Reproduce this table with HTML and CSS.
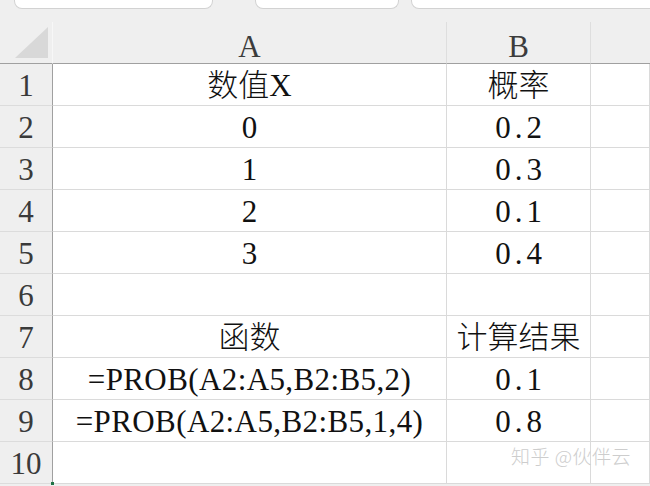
FILE: index.html
```html
<!DOCTYPE html>
<html lang="zh">
<head>
<meta charset="utf-8">
<link rel="stylesheet" href="styles.css">
</head>
<body>
<div class="topbar">
  <div class="tab tab1"></div>
  <div class="tab tab2"></div>
  <div class="tab tab3"></div>
</div>
<div class="sheet">
  <div class="corner"><svg width="53" height="42" viewBox="0 0 53 42"><polygon points="15,36 48,5 48,36" fill="#d8d8d8"/></svg></div>
  <div class="colhead">A</div>
  <div class="colhead">B</div>
  <div class="colhead last"></div>

  <div class="rowhead">1</div><div class="cell">数值X</div><div class="cell">概率</div><div class="cell"></div>
  <div class="rowhead">2</div><div class="cell">0</div><div class="cell dec">0.2</div><div class="cell"></div>
  <div class="rowhead">3</div><div class="cell">1</div><div class="cell dec">0.3</div><div class="cell"></div>
  <div class="rowhead">4</div><div class="cell">2</div><div class="cell dec">0.1</div><div class="cell"></div>
  <div class="rowhead">5</div><div class="cell">3</div><div class="cell dec">0.4</div><div class="cell"></div>
  <div class="rowhead">6</div><div class="cell"></div><div class="cell"></div><div class="cell"></div>
  <div class="rowhead">7</div><div class="cell">函数</div><div class="cell">计算结果</div><div class="cell"></div>
  <div class="rowhead">8</div><div class="cell formula">=PROB(A2:A5,B2:B5,2)</div><div class="cell dec">0.1</div><div class="cell"></div>
  <div class="rowhead">9</div><div class="cell formula">=PROB(A2:A5,B2:B5,1,4)</div><div class="cell dec">0.8</div><div class="cell"></div>
  <div class="rowhead">10</div><div class="cell"></div><div class="cell"></div><div class="cell"></div>
</div>
<div class="watermark">知乎 @伙伴云</div>
<div class="handle"></div>
</body>
</html>
```
FILE: styles.css
```css
* { box-sizing: border-box; }
html, body { margin: 0; padding: 0; }
body {
  width: 650px;
  height: 486px;
  overflow: hidden;
  background: #efefef;
  font-family: "Liberation Serif", "Noto Sans CJK SC", serif;
  font-size: 31px;
  font-weight: 300;
  color: #111;
  position: relative;
}
.topbar {
  height: 22px;
  display: flex;
  align-items: flex-start;
  padding-left: 14px;
}
.tab {
  height: 9px;
  background: #fff;
  border: 1px solid #d2d2d2;
  border-top: none;
  border-radius: 0 0 8px 8px;
  flex: none;
}
.tab1 { width: 199px; }
.tab2 { width: 144px; margin-left: 42px; }
.tab3 { flex: 1; margin-left: 12px; margin-right: -10px; }

.sheet {
  display: grid;
  grid-template-columns: 53px 394px 144px 1fr;
  grid-auto-rows: 42px;
}
.corner, .colhead {
  background: #efefef;
  border-bottom: 1px solid #a0a0a0;
  border-right: 1px solid #dedede;
}
.corner { border-right-color: #f7f7f7; }
.corner svg { display: block; }
.colhead {
  display: flex;
  align-items: center;
  justify-content: center;
  padding-top: 7px;
  color: #3c3c3c;
  line-height: 1;
}
.colhead.last { border-right: none; }
.rowhead {
  background: #efefef;
  border-right: 1px solid #a0a0a0;
  border-bottom: 1px solid #dcdcdc;
  display: flex;
  align-items: center;
  justify-content: center;
  color: #3a3a3a;
  line-height: 1;
  padding-top: 2px;
}
.cell {
  background: #fff;
  border-right: 1px solid #dadada;
  border-bottom: 1px solid #dadada;
  display: flex;
  align-items: center;
  justify-content: center;
  line-height: 1;
  white-space: nowrap;
  padding-top: 2px;
}
.cell.dec { letter-spacing: 4px; padding-left: 4px; }
.cell.formula { letter-spacing: 0.4px; }

.watermark {
  position: absolute;
  left: 511px;
  top: 446px;
  font-family: "Noto Sans CJK SC", sans-serif;
  font-size: 19px;
  font-weight: 300;
  color: #cdcdcd;
  letter-spacing: 0.5px;
  line-height: 1;
}
.handle {
  position: absolute;
  left: 51px;
  top: 482px;
  width: 3px;
  height: 3px;
  background: #217346;
}
```
